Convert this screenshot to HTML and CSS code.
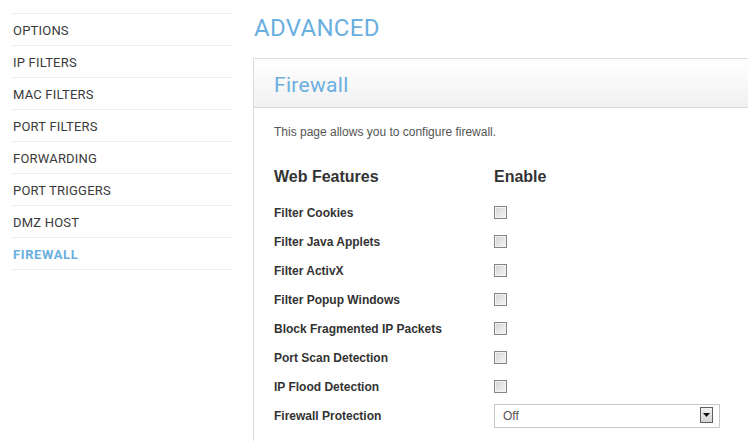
FILE: index.html
```html
<!DOCTYPE html>
<html>
    <head>
        <meta charset="utf-8">
        <title>Advanced - Firewall</title>
        <link rel="stylesheet" href="styles.css">
    </head>
    <body>
        <div class="page">
            <ul class="side-nav">
                <li><a href="#">OPTIONS</a></li>
                <li><a href="#">IP FILTERS</a></li>
                <li><a href="#">MAC FILTERS</a></li>
                <li><a href="#">PORT FILTERS</a></li>
                <li><a href="#">FORWARDING</a></li>
                <li><a href="#">PORT TRIGGERS</a></li>
                <li><a href="#">DMZ HOST</a></li>
                <li class="active"><a href="#">FIREWALL</a></li>
            </ul>
            <div class="main">
                <h1 class="page-title">ADVANCED</h1>
                <div class="panel">
                    <div class="panel-head">
                        <h2>Firewall</h2>
                    </div>
                    <div class="panel-body">
                        <p class="desc">This page allows you to configure firewall.</p>
                        <div class="form-grid">
                            <div class="col-head">Web Features</div>
                            <div class="col-head">Enable</div>

                            <label class="row-label" for="cookies">Filter Cookies</label>
                            <div class="row-field"><input type="checkbox" id="cookies" class="check"></div>

                            <label class="row-label" for="java">Filter Java Applets</label>
                            <div class="row-field"><input type="checkbox" id="java" class="check"></div>

                            <label class="row-label" for="activex">Filter ActivX</label>
                            <div class="row-field"><input type="checkbox" id="activex" class="check"></div>

                            <label class="row-label" for="popup">Filter Popup Windows</label>
                            <div class="row-field"><input type="checkbox" id="popup" class="check"></div>

                            <label class="row-label" for="fragment">Block Fragmented IP Packets</label>
                            <div class="row-field"><input type="checkbox" id="fragment" class="check"></div>

                            <label class="row-label" for="portscan">Port Scan Detection</label>
                            <div class="row-field"><input type="checkbox" id="portscan" class="check"></div>

                            <label class="row-label" for="flood">IP Flood Detection</label>
                            <div class="row-field"><input type="checkbox" id="flood" class="check"></div>

                            <label class="row-label" for="protection">Firewall Protection</label>
                            <div class="row-field">
                                <div class="select-wrap">
                                    <select id="protection" class="select">
                                        <option>Off</option>
                                        <option>Low</option>
                                        <option>Medium</option>
                                        <option>High</option>
                                    </select>
                                    <span class="select-arrow">
                                        <svg width="7" height="4" viewBox="0 0 7 4"><path d="M0 0h7L3.5 4z" fill="#111"/></svg>
                                    </span>
                                </div>
                            </div>
                        </div>
                    </div>
                </div>
            </div>
        </div>
    </body>
</html>
```

FILE: styles.css
```css
html, body{
    margin: 0;
    padding: 0;
    background: #fff;
    overflow: hidden;
}
body{
    font-family: "Liberation Sans", Arial, sans-serif;
    color: #333;
}
.page{
    display: flex;
    align-items: flex-start;
    gap: 20px;
    padding-left: 12px;
}

/* left menu */
.side-nav{
    list-style: none;
    margin: 13px 0 0;
    padding: 0;
    width: 221px;
    flex: none;
    border-top: 1px solid #ececec;
}
.side-nav li{
    border-bottom: 1px solid #ececec;
}
.side-nav a{
    display: block;
    height: 31px;
    line-height: 33px;
    padding-left: 1px;
    font-family: Roboto, "Open Sans", sans-serif;
    font-size: 13px;
    letter-spacing: 0.2px;
    color: #3a3a3a;
    text-decoration: none;
}
.side-nav .active a{
    color: #6aafe0;
    font-weight: bold;
    letter-spacing: 0.6px;
}

/* content */
.main{
    width: 520px;
    flex: none;
    padding-top: 13px;
}
.page-title{
    margin: 0 0 15px 1px;
    font-family: Roboto, "Open Sans", sans-serif;
    font-weight: normal;
    font-size: 24px;
    line-height: 30px;
    letter-spacing: 0.3px;
    color: #6aafe0;
}
.panel{
    border: 1px solid #dcdcdc;
    border-right: none;
}
.panel-head{
    height: 48px;
    background: linear-gradient(#fff, #f1f1f1);
    border-bottom: 1px solid #d6d6d6;
    padding-left: 20px;
}
.panel-head h2{
    margin: 0;
    font-family: Roboto, "Open Sans", sans-serif;
    font-weight: normal;
    font-size: 21px;
    line-height: 52px;
    letter-spacing: 0.3px;
    color: #6aafe0;
}
.panel-body{
    padding: 16px 20px 20px;
}
.desc{
    margin: 0 0 26px;
    font-size: 12px;
    line-height: 17px;
    color: #555;
}
.form-grid{
    display: grid;
    grid-template-columns: 220px 226px;
    grid-template-rows: 31px;
    grid-auto-rows: 29px;
    align-items: center;
}
.col-head{
    font-size: 16px;
    font-weight: bold;
    line-height: 20px;
    align-self: start;
    color: #333;
}
.row-label{
    font-size: 12px;
    font-weight: bold;
    color: #333;
}
.row-field{
    display: flex;
    align-items: center;
}

.check{
    appearance: none;
    -webkit-appearance: none;
    width: 13px;
    height: 13px;
    margin: 0;
    border: 1px solid #858585;
    background: linear-gradient(135deg, #d2d2d2, #f7f7f7);
    box-shadow: inset 0 0 0 1px #f2f2f2;
}
.check:checked{
    background: #fff;
}

.select-wrap{
    position: relative;
    width: 226px;
}
.select{
    appearance: none;
    -webkit-appearance: none;
    display: block;
    width: 100%;
    height: 24px;
    margin: 0;
    padding: 0 8px;
    border: 1px solid #c9c9c9;
    border-radius: 0;
    background: #fff;
    font-family: "Liberation Sans", Arial, sans-serif;
    font-size: 12px;
    color: #555;
}
.select-arrow{
    position: absolute;
    top: 3px;
    right: 7px;
    width: 11px;
    height: 14px;
    border: 1px solid #5e5e5e;
    background: linear-gradient(#f1f1f1, #d3d3d3);
    display: flex;
    align-items: center;
    justify-content: center;
    pointer-events: none;
}
```
